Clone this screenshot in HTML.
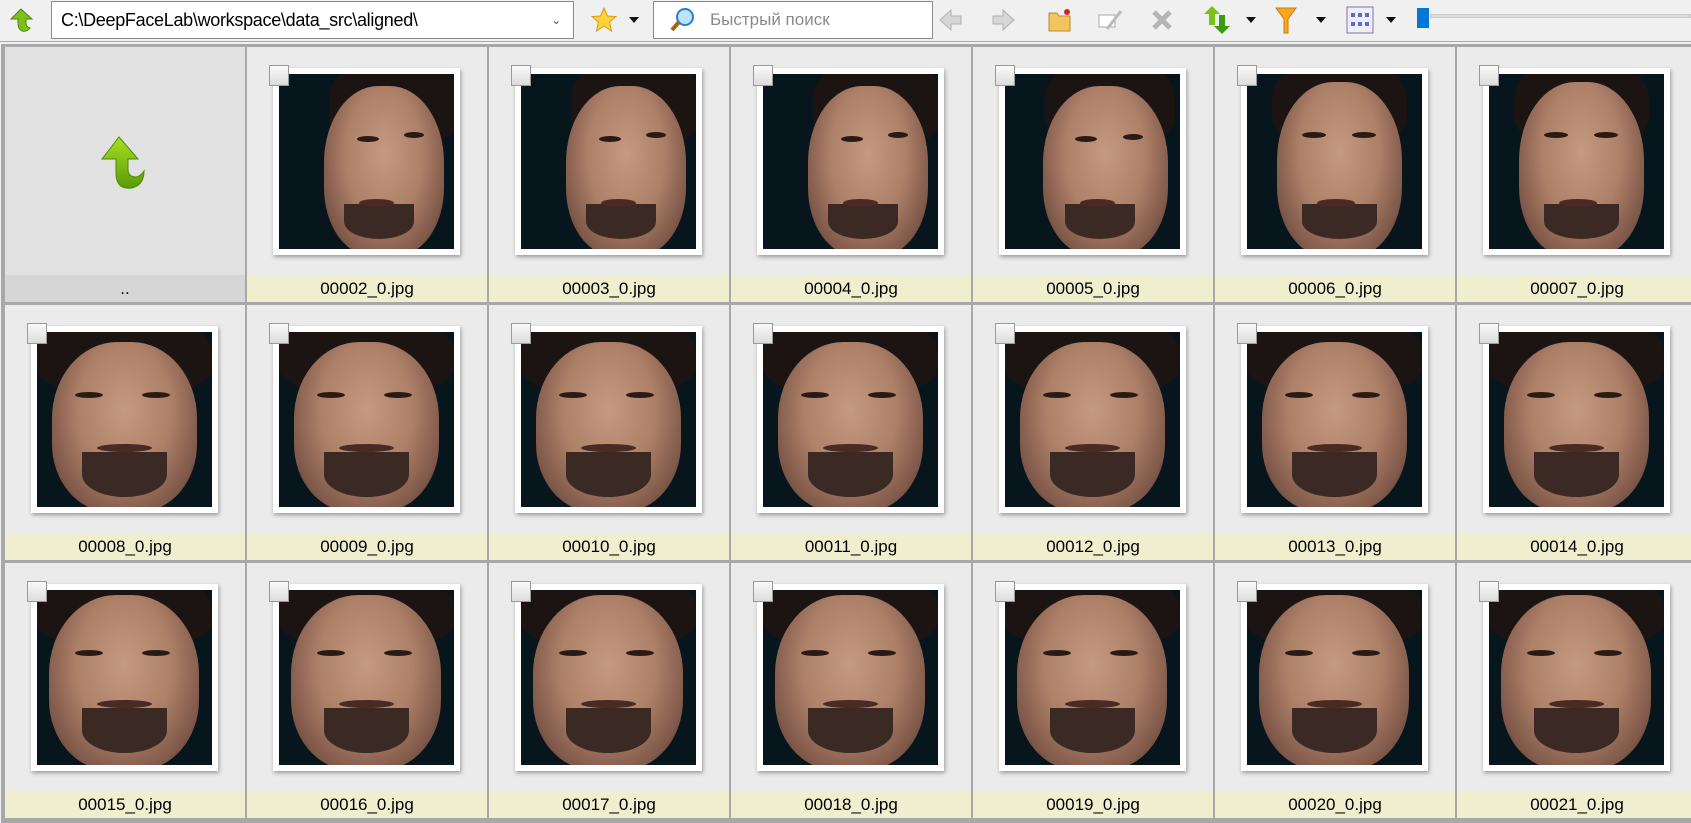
<!DOCTYPE html>
<html><head><meta charset="utf-8">
<style>
*{box-sizing:border-box;margin:0;padding:0}
html{width:1691px;height:823px;overflow:hidden}
body{width:1691px;height:823px;overflow:hidden;background:#f0f0f0;font-family:"Liberation Sans","DejaVu Sans",sans-serif;position:relative}
.tb{position:absolute;left:0;top:0;width:1691px;height:42px;background:#f0f0f0;border-bottom:1px solid #a8a8a8}
.addr{position:absolute;left:51px;top:1px;width:523px;height:38px;background:#fff;border:1px solid #8a8a8a;font-size:18px;line-height:36px;padding-left:9px;color:#000;letter-spacing:-0.3px}
.addr .dd{position:absolute;right:12px;top:0;color:#555;font-size:12px}
.search{position:absolute;left:653px;top:1px;width:280px;height:38px;background:#fff;border:1px solid #8a8a8a;font-size:17px;line-height:36px;padding-left:56px;color:#8a8a8a}
.tri{position:absolute;top:17px;width:0;height:0;border-left:5px solid transparent;border-right:5px solid transparent;border-top:6px solid #111}
.ic{position:absolute}
.grid{position:absolute;left:1px;top:44px;width:1690px;height:779px;overflow:hidden;background:#a8a8a8;border-top:2px solid #a8a8a8;padding:1px 0 0 4px}
.row{display:flex;height:258px}
.cell{position:relative;width:240px;height:255px;margin-right:2px;background:#ebebeb;flex:none}
.lab{position:absolute;left:0;bottom:0;width:100%;height:27px;background:#efefcf;text-align:center;font-size:17px;line-height:27px;color:#000}
.frame{position:absolute;left:26px;top:21px;width:187px;height:187px;background:#fff;box-shadow:1px 2px 4px rgba(0,0,0,.35);padding:6px}
.img{width:175px;height:175px;background:#07161c;position:relative;overflow:hidden}
.cb{position:absolute;left:-4px;top:-3px;width:20px;height:21px;background:linear-gradient(#fafafa,#dcdcdc);border:1px solid #999}
.face{position:absolute;border-radius:45% 45% 40% 40%;background:radial-gradient(ellipse at 50% 40%,#c49a80 0,#ad8068 45%,#80594a 75%,#3a2a22 100%)}
.hair{position:absolute;border-radius:50% 50% 30% 30%;background:#1b1412}
.eye{position:absolute;height:6px;background:#2a1a16;border-radius:50%}
.mouth{position:absolute;height:8px;background:#4a2a24;border-radius:50%}
.beard{position:absolute;border-radius:0 0 50% 50%;background:#3b2a24}
</style></head><body>
<div class="tb">
 <svg class="ic" style="left:8px;top:7px" width="26" height="26" viewBox="0 0 26 26"><path d="M13 2 L24 12 H18 V16 Q18 20 22 21 Q19 25 14 24 Q10 22 10 16 V12 H3 Z" fill="#7cc01a" stroke="#4a8a08" stroke-width="1"/></svg>
 <div class="addr">C:\DeepFaceLab\workspace\data_src\aligned\<span class="dd">&#8964;</span></div>
 <svg class="ic" style="left:590px;top:6px" width="28" height="28" viewBox="0 0 28 28"><path d="M14 2 L17.5 10 L26 10.5 L19.5 16 L21.5 25 L14 20 L6.5 25 L8.5 16 L2 10.5 L10.5 10 Z" fill="#ffd23a" stroke="#d89a10"/></svg>
 <div class="tri" style="left:629px"></div>
 <div class="search">Быстрый поиск</div>
 <svg class="ic" style="left:668px;top:6px" width="28" height="28" viewBox="0 0 28 28"><circle cx="17" cy="11" r="8" fill="#bfe2ff" stroke="#2a7fd0" stroke-width="2"/><path d="M11 16 L4 24" stroke="#a0661a" stroke-width="4"/></svg>
 <svg class="ic" style="left:938px;top:7px" width="26" height="26" viewBox="0 0 26 26"><path d="M2 13 L13 3 V9 H23 V17 H13 V23 Z" fill="#d6d6d6" stroke="#b0b0b0"/></svg>
 <svg class="ic" style="left:990px;top:7px" width="26" height="26" viewBox="0 0 26 26"><path d="M24 13 L13 3 V9 H3 V17 H13 V23 Z" fill="#d6d6d6" stroke="#b0b0b0"/></svg>
 <svg class="ic" style="left:1046px;top:7px" width="28" height="26" viewBox="0 0 28 26"><path d="M3 6 H11 L13 9 H24 V24 H3 Z" fill="#f2c460" stroke="#c08a30"/><circle cx="21" cy="5" r="3" fill="#e02020"/></svg>
 <svg class="ic" style="left:1097px;top:7px" width="28" height="26" viewBox="0 0 28 26"><rect x="2" y="8" width="16" height="12" fill="#fff" stroke="#aaa"/><path d="M10 22 L24 4" stroke="#bbb" stroke-width="3"/></svg>
 <svg class="ic" style="left:1150px;top:8px" width="24" height="24" viewBox="0 0 24 24"><path d="M4 4 L20 20 M20 4 L4 20" stroke="#b5b5b5" stroke-width="5"/></svg>
 <svg class="ic" style="left:1203px;top:5px" width="28" height="30" viewBox="0 0 28 30"><path d="M9 1 L17 9 H12 V20 H6 V9 H1 Z" fill="#7cc01a"/><path d="M19 29 L27 21 H22 V10 H16 V21 H11 Z" fill="#3a9a10"/></svg>
 <div class="tri" style="left:1246px"></div>
 <svg class="ic" style="left:1274px;top:5px" width="24" height="30" viewBox="0 0 24 30"><path d="M2 3 H22 L14 14 V28 H10 V14 Z" fill="#f7a820" stroke="#d07a00"/></svg>
 <div class="tri" style="left:1316px"></div>
 <svg class="ic" style="left:1346px;top:6px" width="28" height="28" viewBox="0 0 28 28"><rect x="1" y="1" width="26" height="26" fill="#eef" stroke="#7777aa"/><g fill="#5a6ad0"><rect x="5" y="7" width="4" height="4"/><rect x="12" y="7" width="4" height="4"/><rect x="19" y="7" width="4" height="4"/><rect x="5" y="16" width="4" height="4"/><rect x="12" y="16" width="4" height="4"/><rect x="19" y="16" width="4" height="4"/></g></svg>
 <div class="tri" style="left:1386px"></div>
 <div style="position:absolute;left:1430px;top:14px;width:261px;height:4px;background:#dcdcdc;border:1px solid #c8c8c8"></div>
 <div style="position:absolute;left:1417px;top:8px;width:12px;height:20px;background:#0078d7"></div>
</div>

<div class="grid">
<div class="row">
 <div class="cell" style="background:#e1e1e1">
  <svg style="position:absolute;left:95px;top:88px" width="50" height="58" viewBox="0 0 50 58"><defs><linearGradient id="g" x1="0" y1="0" x2="0" y2="1"><stop offset="0" stop-color="#a8e020"/><stop offset="1" stop-color="#5a9a08"/></linearGradient></defs><path d="M19 2 L38 24 H28 V34 Q28 42 36 42 Q41 41 44 36 Q44 50 32 53 Q16 55 16 38 V24 H2 Z" fill="url(#g)" stroke="#4a8a08"/></svg>
  <div class="lab" style="background:#d6d6d6">..</div>
 </div>
 <div class="cell"><div class="frame"><div class="img"><div class="hair" style="left:50px;top:-20px;width:130px;height:90px"></div><div class="face" style="left:45px;top:12px;width:120px;height:170px"></div><div class="eye" style="left:78px;top:62px;width:22px"></div><div class="eye" style="left:125px;top:58px;width:20px"></div><div class="beard" style="left:65px;top:130px;width:70px;height:35px"></div><div class="mouth" style="left:80px;top:125px;width:35px"></div></div><div class="cb"></div></div><div class="lab">00002_0.jpg</div></div>
 <div class="cell"><div class="frame"><div class="img"><div class="hair" style="left:50px;top:-20px;width:130px;height:90px"></div><div class="face" style="left:45px;top:12px;width:120px;height:170px"></div><div class="eye" style="left:78px;top:62px;width:22px"></div><div class="eye" style="left:125px;top:58px;width:20px"></div><div class="beard" style="left:65px;top:130px;width:70px;height:35px"></div><div class="mouth" style="left:80px;top:125px;width:35px"></div></div><div class="cb"></div></div><div class="lab">00003_0.jpg</div></div>
 <div class="cell"><div class="frame"><div class="img"><div class="hair" style="left:50px;top:-20px;width:130px;height:90px"></div><div class="face" style="left:45px;top:12px;width:120px;height:170px"></div><div class="eye" style="left:78px;top:62px;width:22px"></div><div class="eye" style="left:125px;top:58px;width:20px"></div><div class="beard" style="left:65px;top:130px;width:70px;height:35px"></div><div class="mouth" style="left:80px;top:125px;width:35px"></div></div><div class="cb"></div></div><div class="lab">00004_0.jpg</div></div>
 <div class="cell"><div class="frame"><div class="img"><div class="hair" style="left:40px;top:-20px;width:130px;height:90px"></div><div class="face" style="left:38px;top:12px;width:125px;height:170px"></div><div class="eye" style="left:70px;top:62px;width:22px"></div><div class="eye" style="left:118px;top:60px;width:20px"></div><div class="beard" style="left:60px;top:130px;width:70px;height:35px"></div><div class="mouth" style="left:75px;top:125px;width:35px"></div></div><div class="cb"></div></div><div class="lab">00005_0.jpg</div></div>
 <div class="cell"><div class="frame"><div class="img"><div class="hair" style="left:25px;top:-20px;width:135px;height:90px"></div><div class="face" style="left:30px;top:8px;width:125px;height:175px"></div><div class="eye" style="left:55px;top:58px;width:24px"></div><div class="eye" style="left:105px;top:58px;width:24px"></div><div class="beard" style="left:55px;top:130px;width:75px;height:35px"></div><div class="mouth" style="left:70px;top:125px;width:38px"></div></div><div class="cb"></div></div><div class="lab">00006_0.jpg</div></div>
 <div class="cell"><div class="frame"><div class="img"><div class="hair" style="left:25px;top:-20px;width:135px;height:90px"></div><div class="face" style="left:30px;top:8px;width:125px;height:175px"></div><div class="eye" style="left:55px;top:58px;width:24px"></div><div class="eye" style="left:105px;top:58px;width:24px"></div><div class="beard" style="left:55px;top:130px;width:75px;height:35px"></div><div class="mouth" style="left:70px;top:125px;width:38px"></div></div><div class="cb"></div></div><div class="lab">00007_0.jpg</div></div>
</div>
<div class="row">
 <div class="cell"><div class="frame"><div class="img"><div class="hair" style="left:0;top:-20px;width:175px;height:80px"></div><div class="face" style="left:15px;top:10px;width:145px;height:170px"></div><div class="eye" style="left:38px;top:60px;width:28px"></div><div class="eye" style="left:105px;top:60px;width:28px"></div><div class="beard" style="left:45px;top:120px;width:85px;height:45px"></div><div class="mouth" style="left:60px;top:112px;width:55px"></div></div><div class="cb"></div></div><div class="lab">00008_0.jpg</div></div>
 <div class="cell"><div class="frame"><div class="img"><div class="hair" style="left:0;top:-20px;width:175px;height:80px"></div><div class="face" style="left:15px;top:10px;width:145px;height:170px"></div><div class="eye" style="left:38px;top:60px;width:28px"></div><div class="eye" style="left:105px;top:60px;width:28px"></div><div class="beard" style="left:45px;top:120px;width:85px;height:45px"></div><div class="mouth" style="left:60px;top:112px;width:55px"></div></div><div class="cb"></div></div><div class="lab">00009_0.jpg</div></div>
 <div class="cell"><div class="frame"><div class="img"><div class="hair" style="left:0;top:-20px;width:175px;height:80px"></div><div class="face" style="left:15px;top:10px;width:145px;height:170px"></div><div class="eye" style="left:38px;top:60px;width:28px"></div><div class="eye" style="left:105px;top:60px;width:28px"></div><div class="beard" style="left:45px;top:120px;width:85px;height:45px"></div><div class="mouth" style="left:60px;top:112px;width:55px"></div></div><div class="cb"></div></div><div class="lab">00010_0.jpg</div></div>
 <div class="cell"><div class="frame"><div class="img"><div class="hair" style="left:0;top:-20px;width:175px;height:80px"></div><div class="face" style="left:15px;top:10px;width:145px;height:170px"></div><div class="eye" style="left:38px;top:60px;width:28px"></div><div class="eye" style="left:105px;top:60px;width:28px"></div><div class="beard" style="left:45px;top:120px;width:85px;height:45px"></div><div class="mouth" style="left:60px;top:112px;width:55px"></div></div><div class="cb"></div></div><div class="lab">00011_0.jpg</div></div>
 <div class="cell"><div class="frame"><div class="img"><div class="hair" style="left:0;top:-20px;width:175px;height:80px"></div><div class="face" style="left:15px;top:10px;width:145px;height:170px"></div><div class="eye" style="left:38px;top:60px;width:28px"></div><div class="eye" style="left:105px;top:60px;width:28px"></div><div class="beard" style="left:45px;top:120px;width:85px;height:45px"></div><div class="mouth" style="left:60px;top:112px;width:55px"></div></div><div class="cb"></div></div><div class="lab">00012_0.jpg</div></div>
 <div class="cell"><div class="frame"><div class="img"><div class="hair" style="left:0;top:-20px;width:175px;height:80px"></div><div class="face" style="left:15px;top:10px;width:145px;height:170px"></div><div class="eye" style="left:38px;top:60px;width:28px"></div><div class="eye" style="left:105px;top:60px;width:28px"></div><div class="beard" style="left:45px;top:120px;width:85px;height:45px"></div><div class="mouth" style="left:60px;top:112px;width:55px"></div></div><div class="cb"></div></div><div class="lab">00013_0.jpg</div></div>
 <div class="cell"><div class="frame"><div class="img"><div class="hair" style="left:0;top:-20px;width:175px;height:80px"></div><div class="face" style="left:15px;top:10px;width:145px;height:170px"></div><div class="eye" style="left:38px;top:60px;width:28px"></div><div class="eye" style="left:105px;top:60px;width:28px"></div><div class="beard" style="left:45px;top:120px;width:85px;height:45px"></div><div class="mouth" style="left:60px;top:112px;width:55px"></div></div><div class="cb"></div></div><div class="lab">00014_0.jpg</div></div>
</div>
<div class="row">
 <div class="cell"><div class="frame"><div class="img"><div class="hair" style="left:0;top:-20px;width:175px;height:75px"></div><div class="face" style="left:12px;top:5px;width:150px;height:175px"></div><div class="eye" style="left:38px;top:60px;width:28px"></div><div class="eye" style="left:105px;top:60px;width:28px"></div><div class="beard" style="left:45px;top:118px;width:85px;height:45px"></div><div class="mouth" style="left:60px;top:110px;width:55px"></div></div><div class="cb"></div></div><div class="lab">00015_0.jpg</div></div>
 <div class="cell"><div class="frame"><div class="img"><div class="hair" style="left:0;top:-20px;width:175px;height:75px"></div><div class="face" style="left:12px;top:5px;width:150px;height:175px"></div><div class="eye" style="left:38px;top:60px;width:28px"></div><div class="eye" style="left:105px;top:60px;width:28px"></div><div class="beard" style="left:45px;top:118px;width:85px;height:45px"></div><div class="mouth" style="left:60px;top:110px;width:55px"></div></div><div class="cb"></div></div><div class="lab">00016_0.jpg</div></div>
 <div class="cell"><div class="frame"><div class="img"><div class="hair" style="left:0;top:-20px;width:175px;height:75px"></div><div class="face" style="left:12px;top:5px;width:150px;height:175px"></div><div class="eye" style="left:38px;top:60px;width:28px"></div><div class="eye" style="left:105px;top:60px;width:28px"></div><div class="beard" style="left:45px;top:118px;width:85px;height:45px"></div><div class="mouth" style="left:60px;top:110px;width:55px"></div></div><div class="cb"></div></div><div class="lab">00017_0.jpg</div></div>
 <div class="cell"><div class="frame"><div class="img"><div class="hair" style="left:0;top:-20px;width:175px;height:75px"></div><div class="face" style="left:12px;top:5px;width:150px;height:175px"></div><div class="eye" style="left:38px;top:60px;width:28px"></div><div class="eye" style="left:105px;top:60px;width:28px"></div><div class="beard" style="left:45px;top:118px;width:85px;height:45px"></div><div class="mouth" style="left:60px;top:110px;width:55px"></div></div><div class="cb"></div></div><div class="lab">00018_0.jpg</div></div>
 <div class="cell"><div class="frame"><div class="img"><div class="hair" style="left:0;top:-20px;width:175px;height:75px"></div><div class="face" style="left:12px;top:5px;width:150px;height:175px"></div><div class="eye" style="left:38px;top:60px;width:28px"></div><div class="eye" style="left:105px;top:60px;width:28px"></div><div class="beard" style="left:45px;top:118px;width:85px;height:45px"></div><div class="mouth" style="left:60px;top:110px;width:55px"></div></div><div class="cb"></div></div><div class="lab">00019_0.jpg</div></div>
 <div class="cell"><div class="frame"><div class="img"><div class="hair" style="left:0;top:-20px;width:175px;height:75px"></div><div class="face" style="left:12px;top:5px;width:150px;height:175px"></div><div class="eye" style="left:38px;top:60px;width:28px"></div><div class="eye" style="left:105px;top:60px;width:28px"></div><div class="beard" style="left:45px;top:118px;width:85px;height:45px"></div><div class="mouth" style="left:60px;top:110px;width:55px"></div></div><div class="cb"></div></div><div class="lab">00020_0.jpg</div></div>
 <div class="cell"><div class="frame"><div class="img"><div class="hair" style="left:0;top:-20px;width:175px;height:75px"></div><div class="face" style="left:12px;top:5px;width:150px;height:175px"></div><div class="eye" style="left:38px;top:60px;width:28px"></div><div class="eye" style="left:105px;top:60px;width:28px"></div><div class="beard" style="left:45px;top:118px;width:85px;height:45px"></div><div class="mouth" style="left:60px;top:110px;width:55px"></div></div><div class="cb"></div></div><div class="lab">00021_0.jpg</div></div>
</div>
</div>
</body></html>
